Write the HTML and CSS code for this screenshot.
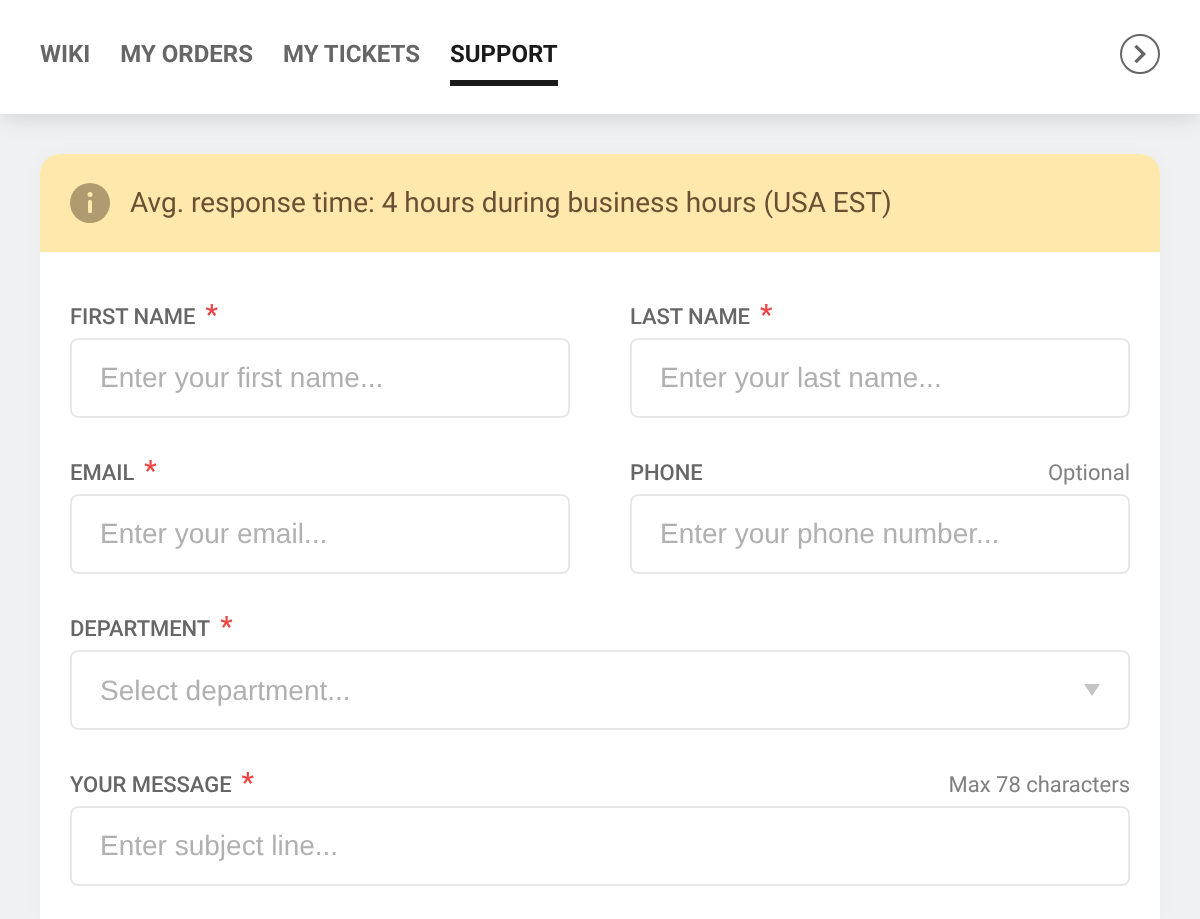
FILE: index.html
```html
<!DOCTYPE html>
<html lang="en">
<head>
<meta charset="utf-8">
<title>Support</title>
<link rel="stylesheet" href="styles.css">
</head>
<body>
<header class="topbar">
  <nav class="tabs">
    <a class="tab">WIKI</a>
    <a class="tab">MY ORDERS</a>
    <a class="tab">MY TICKETS</a>
    <a class="tab tab-active">SUPPORT</a>
  </nav>
  <svg class="next-icon" width="40" height="40" viewBox="0 0 40 40" fill="none">
    <circle cx="20" cy="20" r="19" stroke="#666" stroke-width="2"/>
    <path d="M15.500 11.800 L23.700 20 L15.500 28.200" stroke="#666" stroke-width="3.300"/>
  </svg>
</header>
<main class="content">
  <section class="card">
    <div class="notice">
      <svg class="info-icon" width="40" height="40" viewBox="0 0 40 40">
        <circle cx="20" cy="20" r="20" fill="#b09a70"/>
        <circle cx="20" cy="11.500" r="2.500" fill="#ffe8ab"/>
        <rect x="18" y="17" width="4" height="13" rx="1.500" fill="#ffe8ab"/>
      </svg>
      <span class="notice-text">Avg. response time: 4 hours during business hours (USA EST)</span>
    </div>
    <form class="form">
      <div class="field">
        <div class="label-row"><label class="label">FIRST NAME<span class="req">*</span></label></div>
        <div class="input">Enter your first name...</div>
      </div>
      <div class="field">
        <div class="label-row"><label class="label">LAST NAME<span class="req">*</span></label></div>
        <div class="input">Enter your last name...</div>
      </div>
      <div class="field">
        <div class="label-row"><label class="label">EMAIL<span class="req">*</span></label></div>
        <div class="input">Enter your email...</div>
      </div>
      <div class="field">
        <div class="label-row"><label class="label">PHONE</label><span class="hint">Optional</span></div>
        <div class="input">Enter your phone number...</div>
      </div>
      <div class="field field-wide">
        <div class="label-row"><label class="label">DEPARTMENT<span class="req">*</span></label></div>
        <div class="input input-select">Select department...<span class="caret"></span></div>
      </div>
      <div class="field field-wide">
        <div class="label-row"><label class="label">YOUR MESSAGE<span class="req">*</span></label><span class="hint">Max 78 characters</span></div>
        <div class="input">Enter subject line...</div>
      </div>
    </form>
  </section>
</main>
</body>
</html>
```
FILE: styles.css
```css
* { box-sizing: border-box; }
html, body { height: 100%; }
body {
  margin: 0;
  background: #f0f1f3;
  font-family: Roboto, "Liberation Sans", sans-serif;
  text-rendering: geometricPrecision;
  overflow: hidden;
  display: flex;
  flex-direction: column;
}
.topbar {
  position: relative;
  z-index: 1;
  flex: none;
  height: 114px;
  padding: 0 40px;
  background: #fff;
  box-shadow: 0 2px 24px rgba(0, 0, 0, 0.14);
  display: flex;
  align-items: center;
  justify-content: space-between;
}
.tabs {
  display: flex;
  gap: 30px;
  height: 86px;
  align-self: flex-start;
  will-change: transform;
}
.tab {
  display: flex;
  align-items: center;
  padding-top: 28px;
  font-size: 24px;
  font-weight: 700;
  line-height: 1;
  color: #666;
  border-bottom: 6px solid transparent;
}
.tab-active { color: #1a1a1a; border-bottom-color: #1a1a1a; }
.next-icon { display: block; margin-top: -6px; }
.content { flex: 1; min-height: 0; padding: 40px 40px 0; }
.card {
  height: 100%;
  background: #fff;
  border-radius: 20px 20px 0 0;
  box-shadow: 0 0 20px rgba(0, 0, 0, 0.03);
}
.notice {
  height: 98px;
  padding: 0 30px;
  background: #ffe8ab;
  border-radius: 20px 20px 0 0;
  display: flex;
  align-items: center;
  gap: 20px;
  font-size: 28px;
  letter-spacing: -0.02px;
  color: #6b4f35;
}
.notice-text { position: relative; top: -1px; will-change: transform; }
.info-icon { display: block; flex: none; }
.form {
  padding: 50px 30px 0;
  display: grid;
  grid-template-columns: 1fr 1fr;
  column-gap: 60px;
  row-gap: 40px;
  will-change: transform;
}
.field-wide { grid-column: 1 / -1; }
.label-row {
  height: 36px;
  padding-bottom: 4px;
  display: flex;
  align-items: center;
  justify-content: space-between;
}
.label { font-size: 22px; font-weight: 500; letter-spacing: -0.05px; color: #666; line-height: 28px; }
.req { margin-left: 10px; color: #ee4444; font-size: 28px; line-height: 20px; }
.hint { font-size: 22px; color: #808080; margin-bottom: 2px; }
.input {
  height: 80px;
  padding: 0 28px;
  border: 2px solid #e8e8e8;
  border-radius: 8px;
  display: flex;
  align-items: center;
  justify-content: space-between;
  font-family: "Liberation Sans", Arial, sans-serif;
  font-size: 28px;
  color: #b0b0b0;
}
.input-select { padding-top: 2px; }
.caret {
  width: 0;
  height: 0;
  border-left: 8px solid transparent;
  border-right: 8px solid transparent;
  border-top: 12px solid #c4c4c4;
  margin-top: -2px;
}
```
